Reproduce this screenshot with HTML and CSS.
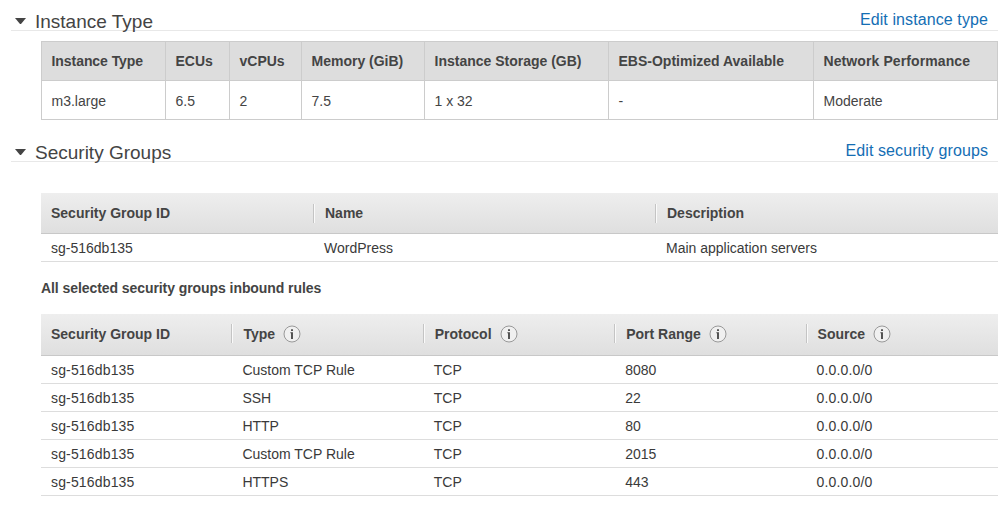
FILE: index.html
```html
<!DOCTYPE html>
<html lang="en">
<head>
<meta charset="utf-8">
<title>Review Instance Launch</title>
<link rel="stylesheet" href="styles.css">
</head>
<body>
<svg class="defs" aria-hidden="true">
  <symbol id="info" viewBox="0 0 18 18">
    <circle cx="9" cy="9" r="8" fill="#f0f0f0" stroke="#999" stroke-width="1"/>
    <path d="M8.1 4.2h1.8v1.7h-1.8zM7.4 7.3h2.5V14H8.1V8.2h-.7z" fill="#444"/>
  </symbol>
</svg>
<main class="review">
  <section class="section section-instance">
    <header class="section-head">
      <span class="caret"></span>
      <h2>Instance Type</h2>
      <a class="edit edit-instance">Edit instance type</a>
    </header>
    <table class="specs">
      <colgroup><col class="c-type"><col class="c-ecu"><col class="c-cpu"><col class="c-mem"><col class="c-storage"><col class="c-ebs"><col class="c-net"></colgroup>
      <tr><th class="snug">Instance Type</th><th>ECUs</th><th>vCPUs</th><th>Memory (GiB)</th><th>Instance Storage (GB)</th><th>EBS-Optimized Available</th><th class="loose">Network Performance</th></tr>
      <tr><td>m3.large</td><td>6.5</td><td>2</td><td>7.5</td><td>1 x 32</td><td>-</td><td>Moderate</td></tr>
    </table>
  </section>
  <section class="section">
    <header class="section-head">
      <span class="caret"></span>
      <h2>Security Groups</h2>
      <a class="edit">Edit security groups</a>
    </header>
    <div class="list groups">
      <div class="row head"><b>Security Group ID</b><b>Name</b><b>Description</b></div>
      <div class="row"><span>sg-516db135</span><span>WordPress</span><span>Main application servers</span></div>
    </div>
    <h3>All selected security groups inbound rules</h3>
    <div class="list rules">
      <div class="row head"><b>Security Group ID</b><b>Type<svg class="info"><use href="#info"/></svg></b><b>Protocol<svg class="info"><use href="#info"/></svg></b><b>Port Range<svg class="info"><use href="#info"/></svg></b><b>Source<svg class="info"><use href="#info"/></svg></b></div>
      <div class="row"><span class="wide">sg-516db135</span><span>Custom TCP Rule</span><span>TCP</span><span>8080</span><span class="wide">0.0.0.0/0</span></div>
      <div class="row"><span class="wide">sg-516db135</span><span>SSH</span><span>TCP</span><span>22</span><span class="wide">0.0.0.0/0</span></div>
      <div class="row"><span class="wide">sg-516db135</span><span>HTTP</span><span>TCP</span><span>80</span><span class="wide">0.0.0.0/0</span></div>
      <div class="row"><span class="wide">sg-516db135</span><span>Custom TCP Rule</span><span>TCP</span><span>2015</span><span class="wide">0.0.0.0/0</span></div>
      <div class="row"><span class="wide">sg-516db135</span><span>HTTPS</span><span>TCP</span><span>443</span><span class="wide">0.0.0.0/0</span></div>
    </div>
  </section>
</main>
</body>
</html>
```
FILE: styles.css
```css
* { box-sizing: border-box; }
body {
  margin: 0;
  background: #fff;
  color: #444;
  font: 14px/20px "Liberation Sans", Arial, sans-serif;
}
.defs { display: none; }
.review { width: 998px; padding-left: 11px; }
.section-head {
  display: flex;
  align-items: flex-start;
  height: 31px;
  padding: 10px 10px 0 4px;
  border-bottom: 1px solid #e8e8e8;
}
.section-instance { height: 131px; }
.caret {
  width: 11px;
  margin: 8px 9px 0 0;
  border: solid transparent;
  border-width: 6px 5.5px 0;
  border-top-color: #444;
}
h2 { margin: 0; font-size: 19px; font-weight: 400; line-height: 24px; }
.edit {
  margin-left: auto;
  color: #146eb4;
  font-size: 16px;
  line-height: 20px;
  letter-spacing: 0.1px;
}

.specs {
  width: 957px;
  margin: 10px 0 0 30px;
  table-layout: fixed;
  border-collapse: collapse;
}
.specs th, .specs td {
  height: 39px;
  padding: 0 0 0 9.5px;
  border: 1px solid #ccc;
  text-align: left;
  white-space: nowrap;
}
.specs th { background: #ddd; }
.specs td { padding-top: 2px; }
.specs .snug { letter-spacing: -0.06px; }
.specs .loose { letter-spacing: 0.1px; }
.c-type { width: 124px; }
.c-ecu { width: 64px; }
.c-cpu { width: 72px; }
.c-mem { width: 123px; }
.c-storage { width: 184px; }
.c-ebs { width: 205px; }
.c-net { width: 184px; }

.list { margin-left: 30px; }
.row {
  display: grid;
  height: 28px;
  align-items: center;
  border-bottom: 1px solid #ddd;
}
.row span { padding-left: 10px; color: #3a3a3a; }
.groups { margin-top: 31px; }
.groups .row { grid-template-columns: 273px 342px 1fr; }
.rules .row { grid-template-columns: 191.4px 191.4px 191.4px 191.4px 1fr; }
.row.head {
  height: 41px;
  background: linear-gradient(#eee, #dfdfdf);
  border-bottom-color: #c8c8c8;
}
.rules .row.head { height: 42px; padding-bottom: 2px; }
.head b {
  display: flex;
  align-items: center;
  height: 19px;
  padding-left: 10px;
}
.head b + b {
  margin-left: -1px;
  padding-left: 11px;
  border-left: 1px solid #c4c4c4;
  box-shadow: inset 1px 0 #fafafa;
}
.info { width: 18px; height: 18px; margin-left: 8px; }
h3 {
  margin: 16px 0 16px 30px;
  font-size: 14px;
  line-height: 20px;
  letter-spacing: -0.07px;
}
.wide { letter-spacing: 0.16px; }
```
